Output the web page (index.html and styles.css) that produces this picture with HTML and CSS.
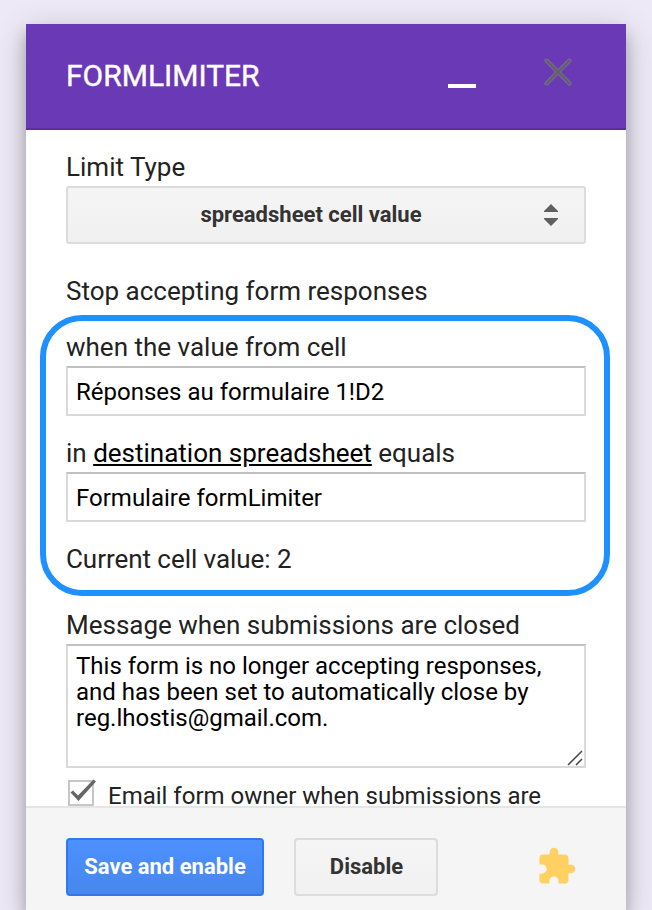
FILE: index.html
```html
<!DOCTYPE html>
<html lang="en">
<head>
    <meta charset="UTF-8">
    <meta name="viewport" content="width=device-width, initial-scale=1.0">
    <title>formLimiter</title>
    <link rel="stylesheet" href="styles.css">
</head>
<body>
    <div class="dialog">
        <div class="header">
            <h1>FORMLIMITER</h1>
            <span class="minimize"></span>
            <svg class="close" width="30" height="30" viewBox="0 0 30 30">
                <path d="M3.500 3.500L26.500 26.500M26.500 3.500L3.500 26.500" stroke="#85778f" stroke-width="4" stroke-linecap="round"/>
                <path d="M3.500 3.500L26.500 26.500M26.500 3.500L3.500 26.500" stroke="#62606a" stroke-width="2.8" stroke-linecap="round"/>
            </svg>
        </div>

        <div class="content">
            <label class="label">Limit Type</label>
            <div class="select">
                <span class="select-text">spreadsheet cell value</span>
                <svg width="14" height="22" viewBox="0 0 14 22">
                    <path d="M7 0L14 7V8H0V7ZM0 14H14V15L7 22L0 15Z" fill="#606060"/>
                </svg>
            </div>

            <p class="label stop">Stop accepting form responses</p>

            <div class="highlight">
                <label class="label">when the value from cell</label>
                <input class="field" type="text" value="Réponses au formulaire 1!D2">
                <p class="label spaced">in <a href="#">destination spreadsheet</a> equals</p>
                <input class="field" type="text" value="Formulaire formLimiter">
                <p class="label spaced current">Current cell value: 2</p>
            </div>

            <label class="label">Message when submissions are closed</label>
            <div class="message">
                <textarea class="field">This form is no longer accepting responses, and has been set to automatically close by reg.lhostis@gmail.com.</textarea>
                <svg class="grip" width="16" height="16" viewBox="0 0 16 16">
                    <path d="M1 15L15 1M9 15L15 9" stroke="#444" stroke-width="1.5"/>
                </svg>
            </div>

            <div class="check-row">
                <svg width="30" height="30" viewBox="0 0 30 30">
                    <rect x="3" y="5" width="24" height="24" fill="#fff" stroke="#c6c6c6" stroke-width="2"/>
                    <path d="M4.500 16.500L7 14.500L12 19.500L27.500 3.500L30 5.500L12.500 25Z" fill="#666"/>
                </svg>
                <span>Email form owner when submissions are</span>
            </div>
        </div>

        <div class="footer">
            <button class="btn btn-blue">Save and enable</button>
            <button class="btn">Disable</button>
            <svg class="puzzle" width="41" height="41" viewBox="0 0 24 24">
                <path d="M20.500 11H19V7c0-1.100-.9-2-2-2h-4V3.500C13 2.120 11.880 1 10.500 1S8 2.120 8 3.500V5H4c-1.100 0-1.990.9-1.990 2v3.800H3.500c1.490 0 2.700 1.210 2.700 2.700s-1.210 2.700-2.700 2.700H2V20c0 1.100.9 2 2 2h3.800v-1.500c0-1.490 1.210-2.700 2.700-2.700 1.490 0 2.700 1.210 2.700 2.700V22H17c1.100 0 2-.9 2-2v-4h1.500c1.380 0 2.500-1.120 2.500-2.500S21.880 11 20.500 11z" fill="#ffd062"/>
            </svg>
        </div>
    </div>
</body>
</html>
```

FILE: styles.css
```css
* {
    box-sizing: border-box;
}

body {
    margin: 0;
    padding: 24px 26px 0;
    height: 910px;
    overflow: hidden;
    background: #ede9f6;
    font-family: Roboto, sans-serif;
    font-size: 26px;
    color: #222;
}

.dialog {
    display: flex;
    flex-direction: column;
    width: 600px;
    height: 886px;
    background: #fff;
    box-shadow: 0 8px 32px rgba(0, 0, 0, 0.2), 0 10px 14px rgba(0, 0, 0, 0.22);
}

.header {
    display: flex;
    flex: none;
    height: 106px;
    padding: 0 53px 0 40px;
    background: #6a39b5;
    border-bottom: 2px solid #5a2f9e;
}

.header h1 {
    flex: 1;
    margin: 0;
    color: #fff;
    font-size: 30px;
    font-weight: 400;
    line-height: 103px;
    -webkit-text-stroke: 0.4px #fff;
}

.minimize {
    width: 28px;
    height: 4px;
    margin: 60px 67px 0 0;
    background: #fff;
}

.close {
    margin-top: 33px;
}

.content {
    flex: none;
    height: 676px;
    padding: 19px 40px 0;
    overflow: hidden;
}

.label {
    display: block;
    margin: 0;
    line-height: 37px;
}

.label a {
    color: #000;
    text-decoration: underline;
}

.select {
    display: flex;
    align-items: center;
    height: 58px;
    padding: 0 26px 0 10px;
    border: 2px solid #dcdcdc;
    border-radius: 3px;
    background: linear-gradient(#f5f5f5, #f0f0f0);
    color: #333;
    font-size: 22px;
    font-weight: 700;
}

.select-text {
    flex: 1;
    padding-bottom: 2px;
    text-align: center;
}

.stop {
    margin-top: 29px;
}

.highlight {
    height: 281px;
    margin: 5px -24px 11px -26px;
    padding: 8px 18px 0 20px;
    border: 6px solid #1e90ff;
    border-radius: 42px;
}

.field {
    display: block;
    width: 100%;
    height: 50px;
    margin: 0;
    padding: 2px 8px 0;
    border: 2px solid #d9d9d9;
    border-top-color: #c0c0c0;
    outline: none;
    background: #fff;
    color: #000;
    font-family: inherit;
    font-size: 24px;
}

.spaced {
    margin-top: 19px;
}

.current {
    letter-spacing: -0.05px;
}

.message {
    position: relative;
}

textarea.field {
    height: 124px;
    padding-top: 7px;
    line-height: 26px;
    resize: none;
    overflow: hidden;
}

.grip {
    position: absolute;
    right: 3px;
    bottom: 2px;
}

.check-row {
    display: flex;
    height: 38px;
    padding-top: 8px;
    font-size: 24px;
    line-height: 30px;
}

.check-row span {
    padding-top: 5px;
    margin-left: 12px;
}

.footer {
    display: flex;
    align-items: flex-start;
    flex: 1;
    padding: 30px 49px 0 40px;
    background: #f5f5f5;
    border-top: 2px solid #e5e5e5;
}

.btn {
    width: 144px;
    height: 58px;
    padding: 0 0 2px 1px;
    border: 2px solid #dcdcdc;
    border-radius: 4px;
    background: linear-gradient(#f5f5f5, #f1f1f1);
    color: #333;
    font-family: inherit;
    font-size: 22px;
    font-weight: 700;
}

.btn-blue {
    width: 198px;
    margin-right: 30px;
    padding-left: 0;
    border-color: #3079ed;
    background: linear-gradient(#4d90fe, #4787ed);
    color: #fff;
}

.puzzle {
    margin: 8px 0 0 auto;
}
```
